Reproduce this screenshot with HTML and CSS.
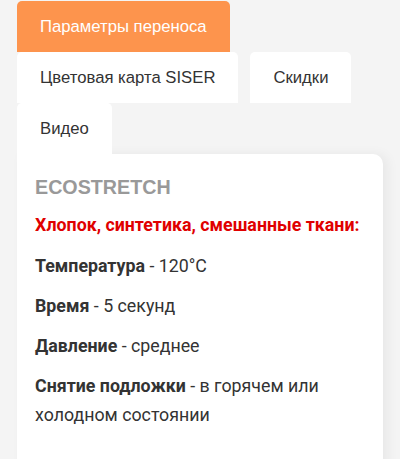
FILE: index.html
```html
<!DOCTYPE html>
<html lang="ru">
<head>
<meta charset="utf-8">
<link rel="stylesheet" href="styles.css">
</head>
<body>
<div class="page">
  <div class="tabs">
    <div class="tab active">Параметры переноса</div>
    <div class="tab">Цветовая карта SISER</div>
    <div class="tab">Скидки</div>
    <div class="tab">Видео</div>
  </div>
  <div class="card">
    <h2 class="title">ECOSTRETCH</h2>
    <p class="subtitle">Хлопок, синтетика, смешанные ткани:</p>
    <p class="row"><b>Температура</b> - 120°C</p>
    <p class="row"><b>Время</b> - 5 секунд</p>
    <p class="row"><b>Давление</b> - среднее</p>
    <p class="row"><b>Снятие подложки</b> - в горячем или холодном состоянии</p>
  </div>
</div>
</body>
</html>
```

FILE: styles.css
```css
html, body {
  margin: 0;
  padding: 0;
  background: #f4f4f4;
}
.page {
  padding: 1px 17px 0;
}
.tabs {
  display: flex;
  flex-wrap: wrap;
  column-gap: 12px;
}
.tab {
  height: 51px;
  line-height: 51px;
  padding: 0 23px;
  background: #fff;
  border-radius: 5px 5px 0 0;
  font-family: "Liberation Sans", Arial, sans-serif;
  font-size: 16.7px;
  color: #333;
}
.tab.active {
  background: #fd944d;
  color: #fff;
}
.card {
  background: #fff;
  border-radius: 0 10px 0 0;
  box-shadow: 5px 0 12px rgba(0,0,0,0.05);
  padding: 20px 18px 40px;
  min-height: 300px;
}
.title {
  margin: 0 0 10px;
  font-family: "Liberation Sans", Arial, sans-serif;
  font-weight: bold;
  font-size: 19.7px;
  line-height: 26px;
  color: #999;
}
.subtitle {
  margin: 0 0 12px;
  font-family: Roboto, sans-serif;
  font-weight: bold;
  font-size: 17.8px;
  line-height: 29px;
  color: #e00000;
}
.row {
  margin: 0 0 11px;
  font-family: Roboto, sans-serif;
  font-size: 17.8px;
  line-height: 29px;
  color: #333;
}
.row b {
  font-weight: bold;
}
```
